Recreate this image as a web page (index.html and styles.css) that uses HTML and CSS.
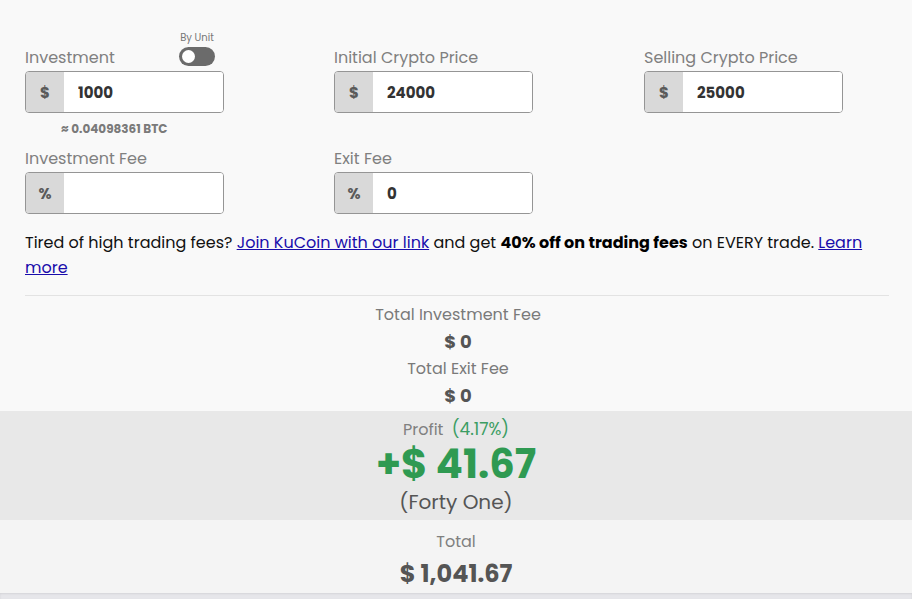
FILE: index.html
```html
<!DOCTYPE html>
<html lang="en">
<head>
<meta charset="utf-8">
<title>Crypto Profit Calculator</title>
<link rel="stylesheet" href="styles.css">
</head>
<body>
<main class="calc">
  <section class="inputs">
    <div class="field">
      <div class="field-head tall">
        <label class="field-label" for="investment">Investment</label>
        <div class="unit-switch">
          <span class="unit-caption">By Unit</span>
          <span class="toggle"><span class="knob"></span></span>
        </div>
      </div>
      <div class="input-group">
        <span class="prefix">$</span>
        <input id="investment" class="value" type="text" value="1000">
      </div>
      <div class="conversion">≈ 0.04098361 BTC</div>
    </div>

    <div class="field">
      <div class="field-head tall">
        <label class="field-label" for="initial">Initial Crypto Price</label>
      </div>
      <div class="input-group">
        <span class="prefix">$</span>
        <input id="initial" class="value" type="text" value="24000">
      </div>
    </div>

    <div class="field">
      <div class="field-head tall">
        <label class="field-label" for="selling">Selling Crypto Price</label>
      </div>
      <div class="input-group">
        <span class="prefix">$</span>
        <input id="selling" class="value" type="text" value="25000">
      </div>
    </div>

    <div class="field">
      <div class="field-head">
        <label class="field-label" for="inv-fee">Investment Fee</label>
      </div>
      <div class="input-group">
        <span class="prefix">%</span>
        <input id="inv-fee" class="value" type="text" value="">
      </div>
    </div>

    <div class="field">
      <div class="field-head">
        <label class="field-label" for="exit-fee">Exit Fee</label>
      </div>
      <div class="input-group">
        <span class="prefix">%</span>
        <input id="exit-fee" class="value" type="text" value="0">
      </div>
    </div>
  </section>

  <p class="promo">Tired of high trading fees? <a href="#">Join KuCoin with our link</a> and get <strong>40% off on trading fees</strong> on EVERY trade. <a href="#">Learn more</a></p>

  <hr class="divider">

  <section class="fees">
    <div class="fee-label">Total Investment Fee</div>
    <div class="fee-value">$ 0</div>
    <div class="fee-label">Total Exit Fee</div>
    <div class="fee-value">$ 0</div>
  </section>
</main>

<section class="profit">
  <div class="profit-head">Profit <span class="pct">(4.17%)</span></div>
  <div class="profit-amount">+$ 41.67</div>
  <div class="profit-words">(Forty One)</div>
</section>

<section class="total">
  <div class="total-label">Total</div>
  <div class="total-amount">$ 1,041.67</div>
</section>
<div class="foot"></div>
</body>
</html>
```

FILE: styles.css
```css
* {
  box-sizing: border-box;
}

html, body {
  margin: 0;
  padding: 0;
  background: #f9f9f9;
  font-family: Poppins, "Open Sans", sans-serif;
  color: #333;
}

.calc {
  padding: 30px 23px 0 25px;
}

/* input grid */
.inputs {
  display: grid;
  grid-template-columns: 309px 310px 1fr;
  row-gap: 10px;
  align-items: start;
}

.field-head {
  height: 25px;
  width: 199px;
  display: flex;
  align-items: flex-end;
  justify-content: space-between;
}

.field-head.tall {
  height: 41px;
}

.field-label {
  font-size: 16px;
  line-height: 24px;
  color: #808080;
  padding-bottom: 1px;
}

.unit-switch {
  display: flex;
  flex-direction: column;
  align-items: center;
  margin-right: 9px;
  margin-bottom: 5px;
}

.unit-caption {
  font-size: 10px;
  line-height: 14px;
  color: #777;
  margin-bottom: 2px;
}

.toggle {
  width: 36px;
  height: 19px;
  border-radius: 10px;
  background: #6b6b6b;
  position: relative;
  display: block;
}

.knob {
  position: absolute;
  left: 3px;
  top: 3px;
  width: 13px;
  height: 13px;
  border-radius: 50%;
  background: #fff;
}

.input-group {
  display: flex;
  width: 199px;
  height: 42px;
  border: 1px solid #959595;
  border-radius: 4px;
  overflow: hidden;
  background: #fff;
}

.prefix {
  width: 38px;
  flex: none;
  background: #d9d9d9;
  display: flex;
  align-items: center;
  justify-content: center;
  font-weight: 700;
  font-size: 15px;
  color: #5a5a5a;
}

.value {
  border: 0;
  outline: 0;
  flex: 1;
  min-width: 0;
  padding: 0 0 0 14px;
  font-family: inherit;
  font-size: 15px;
  font-weight: 700;
  color: #333;
  background: #fff;
}

.conversion {
  margin: 8px 0 0 36px;
  font-size: 12px;
  line-height: 16px;
  font-weight: 700;
  color: #7a7a7a;
}

/* promo text */
.promo {
  margin: 16px 0 0;
  font-size: 16px;
  line-height: 25px;
  color: #111;
}

.promo a {
  color: #1a0dab;
}

.promo strong {
  font-weight: 700;
  color: #000;
}

.divider {
  border: 0;
  border-top: 1px solid #e3e3e3;
  margin: 15px 0 6px;
}

/* fee summary */
.fees {
  text-align: center;
  padding: 0 0 1px 2px;
}

.fee-label {
  font-size: 16px;
  line-height: 26px;
  color: #7a7a7a;
}

.fee-value {
  font-size: 18px;
  line-height: 28px;
  font-weight: 700;
  color: #555;
}

/* profit band */
.profit {
  background: #e8e8e8;
  text-align: center;
  height: 109px;
  padding-top: 6px;
}

.profit-head {
  font-size: 16px;
  line-height: 24px;
  color: #808080;
}

.pct {
  font-size: 17px;
  color: #3b9d63;
  margin-left: 4px;
}

.profit-amount {
  font-size: 40px;
  line-height: 47px;
  font-weight: 700;
  color: #2f9a52;
  margin-top: -1px;
}

.profit-words {
  font-size: 20px;
  line-height: 28px;
  color: #555;
}

/* total band */
.total {
  background: #f4f4f4;
  text-align: center;
  height: 73px;
  padding-top: 9px;
}

.total-label {
  font-size: 16px;
  line-height: 26px;
  color: #808080;
}

.total-amount {
  font-size: 24px;
  line-height: 36px;
  font-weight: 700;
  color: #555;
  margin-top: 1px;
}

.foot {
  height: 6px;
  background: #e6e6ea;
  box-shadow: inset 0 1px 2px rgba(0, 0, 0, 0.08);
}
```
